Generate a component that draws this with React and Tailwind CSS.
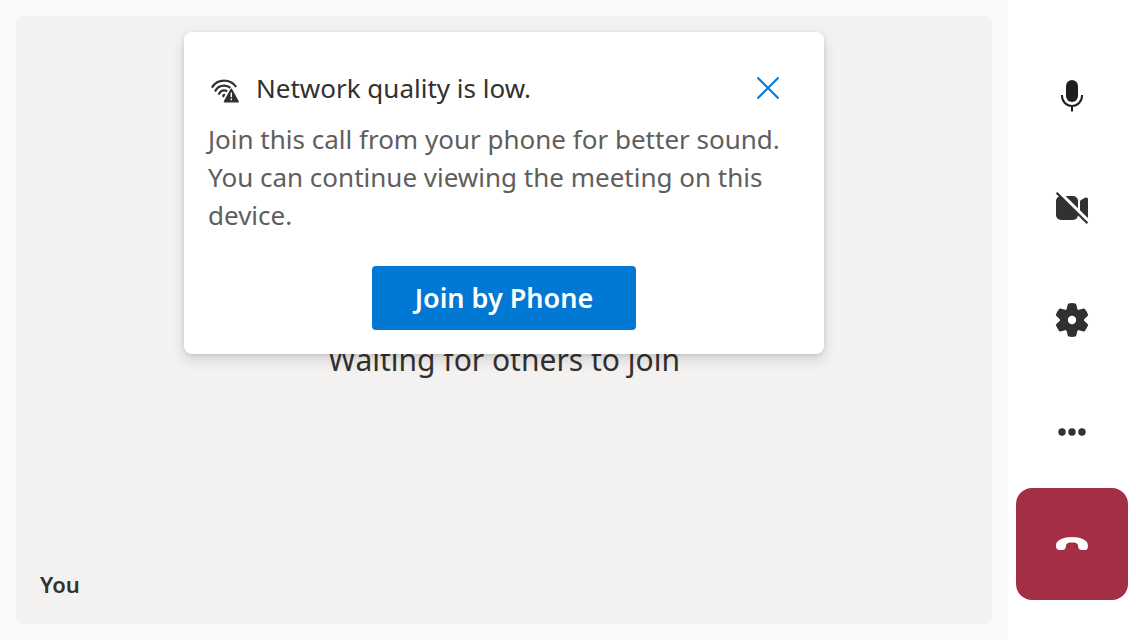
import React from "react";

function WifiWarningIcon() {
  return (
    <svg viewBox="0 0 32 32" className="size-8" fill="none" aria-hidden="true">
      <g stroke="#323130" strokeWidth="2.2">
        <path d="M3.800 15.600C6.400 11.600 10.800 8.700 16 8.700C21.200 8.700 25.600 11.200 28.200 15" />
        <path d="M7 19.400C8.800 15.800 12 13.600 16 13.600C18.800 13.600 20.800 14.400 22.400 15.900" />
        <path d="M10.600 22.600C11.800 20 13.600 18.400 16 18.400C17.200 18.400 18.200 18.700 19.200 19.200" />
      </g>
      <path d="M14.200 24.200a2 2 0 0 1 3.300-1.900l-1.600 3.200a2 2 0 0 1-1.700-1.300z" fill="#323130" />
      <path d="M23.300 17.400L30 29.600H16.600z" fill="#323130" stroke="#323130" strokeWidth="1.800" strokeLinejoin="round" />
      <path d="M23.300 20.400v4.800M23.300 26.400v1.800" stroke="#fff" strokeWidth="1.400" />
    </svg>
  );
}

function CloseIcon() {
  return (
    <svg viewBox="0 0 24 24" className="size-6" aria-hidden="true">
      <path d="M1.500 1.500l21 21M22.500 1.500l-21 21" stroke="#0078d4" strokeWidth="2" />
    </svg>
  );
}

function MicIcon() {
  return (
    <svg viewBox="0 0 40 40" className="size-10" aria-hidden="true">
      <rect x="14" y="4" width="12" height="22" rx="6" fill="#201f1e" />
      <path d="M10 19v1a10 10 0 0 0 20 0v-1M20 30v5.500" fill="none" stroke="#201f1e" strokeWidth="2" />
    </svg>
  );
}

function VideoOffIcon() {
  return (
    <svg viewBox="0 0 40 40" className="size-10" aria-hidden="true">
      <rect x="4" y="8" width="22" height="24" rx="5" fill="#323130" />
      <path d="M28 13.400Q28 12.600 28.700 12.200L33 9.800Q36 8.600 36 11.400V28.600Q36 31.400 33 30.200L28.700 27.800Q28 27.400 28 26.600z" fill="#323130" />
      <path d="M5.800 3.200L37.200 34.200" stroke="#fff" strokeWidth="4" />
      <path d="M4.600 4.800L35.400 35.200" stroke="#323130" strokeWidth="2.200" />
    </svg>
  );
}

function GearIcon() {
  return (
    <svg viewBox="-20 -20 40 40" className="size-10" fill="#323130" aria-hidden="true">
      <circle r="12" />
      {[0, 60, 120, 180, 240, 300].map((angle) => (
        <path
          key={angle}
          d="M-3.200 -15.600Q0 -16.200 3.200 -15.600L4.400 -10.800L0 -4L-4.400 -10.800z"
          transform={`rotate(${angle})`}
          stroke="#323130"
          strokeWidth="2"
          strokeLinejoin="round"
        />
      ))}
      <circle r="4.200" fill="#fff" />
    </svg>
  );
}

function MoreIcon() {
  return (
    <svg viewBox="0 0 40 40" className="size-10" fill="#323130" aria-hidden="true">
      <circle cx="10" cy="20" r="3.700" />
      <circle cx="20" cy="20" r="3.700" />
      <circle cx="30" cy="20" r="3.700" />
    </svg>
  );
}

function HangUpIcon() {
  return (
    <svg viewBox="0 0 40 40" className="size-10" aria-hidden="true">
      <path
        d="M20 13C28.500 13 36 16 36 21.500C36 24.500 35.200 26 33 26H30C27.500 26 26.500 25 26.200 23L25.900 21C25.600 19.200 23 18.600 20 18.600S14.400 19.200 14.100 21L13.800 23C13.500 25 12.500 26 10 26H7.600C5 26 4 24.500 4 21.500C4 16 11.500 13 20 13z"
        fill="#fff"
      />
    </svg>
  );
}

const controls = [
  { label: "Mute", Icon: MicIcon },
  { label: "Turn camera on", Icon: VideoOffIcon },
  { label: "Devices", Icon: GearIcon },
  { label: "More", Icon: MoreIcon },
];

function NetworkPrompt() {
  return (
    <section
      aria-labelledby="prompt-title"
      className="absolute inset-x-4 top-4 mx-auto flex max-w-[640px] flex-col rounded-lg bg-white p-6 shadow-[0_6px_14px_rgba(0,0,0,0.13),0_1px_4px_rgba(0,0,0,0.11)]"
    >
      <header className="flex h-16 items-center gap-4">
        <WifiWarningIcon />
        <h2 id="prompt-title" className="flex-1 text-[26px] text-[#323130]">
          Network quality is low.
        </h2>
        <button type="button" aria-label="Close" className="flex size-16 items-center justify-center">
          <CloseIcon />
        </button>
      </header>
      <p className="text-[26px] leading-[38px] text-[#605e5c]">
        Join this call from your phone for better sound. You can continue viewing the meeting on this device.
      </p>
      <button
        type="button"
        className="mt-8 flex h-16 w-[264px] items-center justify-center self-center rounded bg-[#0078d4] text-[27px] font-semibold text-white"
      >
        Join by Phone
      </button>
    </section>
  );
}

export default function App() {
  return (
    <div className="flex min-h-screen bg-[#faf9f8] font-['Noto_Sans','Open_Sans',sans-serif]">
      <main className="flex flex-1 p-4">
        <div className="relative flex flex-1 flex-col rounded-lg bg-[#f3f2f1] p-6 text-[#323130]">
          <div className="flex flex-1 items-center justify-center pt-28">
            <p className="text-[30px] leading-10">Waiting for others to join</p>
          </div>
          <p className="text-[22px] leading-8 font-semibold">You</p>
          <NetworkPrompt />
        </div>
      </main>
      <aside aria-label="Call controls" className="flex flex-col justify-center bg-white px-2">
        {controls.map(({ label, Icon }) => (
          <button key={label} type="button" aria-label={label} className="flex size-28 items-center justify-center">
            <Icon />
          </button>
        ))}
        <button
          type="button"
          aria-label="Leave call"
          className="flex size-28 items-center justify-center rounded-2xl bg-[#a42e43]"
        >
          <HangUpIcon />
        </button>
      </aside>
    </div>
  );
}
